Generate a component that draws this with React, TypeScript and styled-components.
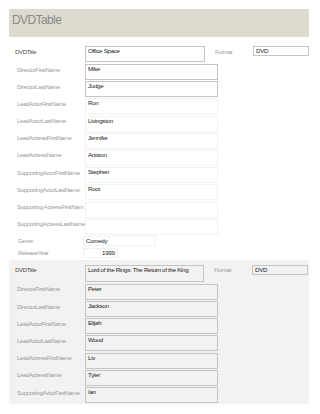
import React from 'react'
import styled, { createGlobalStyle } from 'styled-components'

const GlobalStyle = createGlobalStyle`
  body {
    margin: 0;
    background: #fff;
    font-family: "Liberation Sans", Arial, sans-serif;
  }
`;

const Page = styled.div`
  width: 320px;
  height: 414px;
  padding: 9px 11px 0 9px;
  box-sizing: border-box;
  overflow: hidden;
`;

const Header = styled.div`
  height: 28px;
  background: #dddad0;
  padding: 4px 0 0 3px;
  box-sizing: border-box;
`;

const Title = styled.h1`
  margin: 0;
  font-size: 12px;
  letter-spacing: -0.6px;
  font-weight: normal;
  color: #8a8a88;
  line-height: 14px;
`;

const Record = styled.div<{ $shaded?: boolean; $top: number }>`
  background: ${p => (p.$shaded ? '#f2f2f2' : '#fff')};
  padding-top: ${p => p.$top}px;
`;

const Row = styled.div<{ $h: number }>`
  display: flex;
  align-items: flex-start;
  height: ${p => p.$h}px;
`;

const Label = styled.div<{ $strong?: boolean; $indent?: number }>`
  width: 76px;
  flex-shrink: 0;
  box-sizing: border-box;
  padding: 1.5px 0 0 ${p => p.$indent ?? 8}px;
  font-size: 6px;
  letter-spacing: -0.33px;
  line-height: 8px;
  color: ${p => (p.$strong ? '#4a4a4a' : '#9a9a9a')};
  white-space: nowrap;
`;

const Box = styled.div<{ $w: number; $h: number; $faint?: boolean; $pad?: number }>`
  width: ${p => p.$w}px;
  height: ${p => p.$h}px;
  box-sizing: border-box;
  border: 1px solid ${p => (p.$faint ? '#f1f1f1' : '#c4c4c4')};
  padding: 0 0 0 ${p => p.$pad ?? 2}px;
  font-size: 6.2px;
  letter-spacing: -0.3px;
  line-height: 8px;
  color: #222;
  white-space: nowrap;
  overflow: hidden;
`;

const FormatLabel = styled.div`
  width: 38px;
  margin-left: 10px;
  padding-top: 1.5px;
  font-size: 6px;
  letter-spacing: -0.3px;
  line-height: 8px;
  color: #9a9a9a;
`;

type Movie = {
  title: string
  format: string
  fields: [string, string][]
  genre?: string
  year?: string
}

const movies: Movie[] = [
  {
    title: 'Office Space',
    format: 'DVD',
    fields: [
      ['DirectorFirstName', 'Mike'],
      ['DirectorLastName', 'Judge'],
      ['LeadActorFirstName', 'Ron'],
      ['LeadActorLastName', 'Livingston'],
      ['LeadActressFirstName', 'Jennifer'],
      ['LeadActressName', 'Aniston'],
      ['SupportingActorFirstName', 'Stephen'],
      ['SupportingActorLastName', 'Root'],
      ['Supporting ActressFirstNam', ''],
      ['SupportingActressLastName', ''],
    ],
    genre: 'Comedy',
    year: '1999',
  },
  {
    title: 'Lord of the Rings: The Return of the King',
    format: 'DVD',
    fields: [
      ['DirectorFirstName', 'Peter'],
      ['DirectorLastName', 'Jackson'],
      ['LeadActorFirstName', 'Elijah'],
      ['LeadActorLastName', 'Wood'],
      ['LeadActressFirstName', 'Liv'],
      ['LeadActressName', 'Tyler'],
      ['SupportingActorFirstName', 'Ian'],
    ],
  },
]

const MovieRecord = ({ movie, shaded }: { movie: Movie; shaded?: boolean }) => (
  <Record $shaded={shaded} $top={shaded ? 5 : 9}>
    <Row $h={shaded ? 19 : 18}>
      <Label $strong $indent={6}>DVDTitle</Label>
      <Box $w={shaded ? 119 : 120} $h={shaded ? 17 : 16}>{movie.title}</Box>
      <FormatLabel>Format</FormatLabel>
      <Box $w={56} $h={10}>{movie.format}</Box>
    </Row>
    {movie.fields.map(([name, value], i) => (
      <Row key={name} $h={17.2}>
        <Label>{name}</Label>
        <Box $w={133} $h={16} $faint={!shaded && i > 1}>{value}</Box>
      </Row>
    ))}
    {movie.genre && (
      <Row $h={12}>
        <Label $indent={9}>Genre</Label>
        <Box $w={73} $h={10} $faint style={{ marginLeft: -2 }}>{movie.genre}</Box>
      </Row>
    )}
    {movie.year && (
      <Row $h={12}>
        <Label $indent={9}>ReleaseYear</Label>
        <Box $w={35} $h={10} $faint $pad={18} style={{ marginLeft: -2 }}>{movie.year}</Box>
      </Row>
    )}
  </Record>
)

const App = () => (
  <Page>
    <GlobalStyle />
    <Header>
      <Title>DVDTable</Title>
    </Header>
    <MovieRecord movie={movies[0]} />
    <MovieRecord movie={movies[1]} shaded />
  </Page>
)

export default App
